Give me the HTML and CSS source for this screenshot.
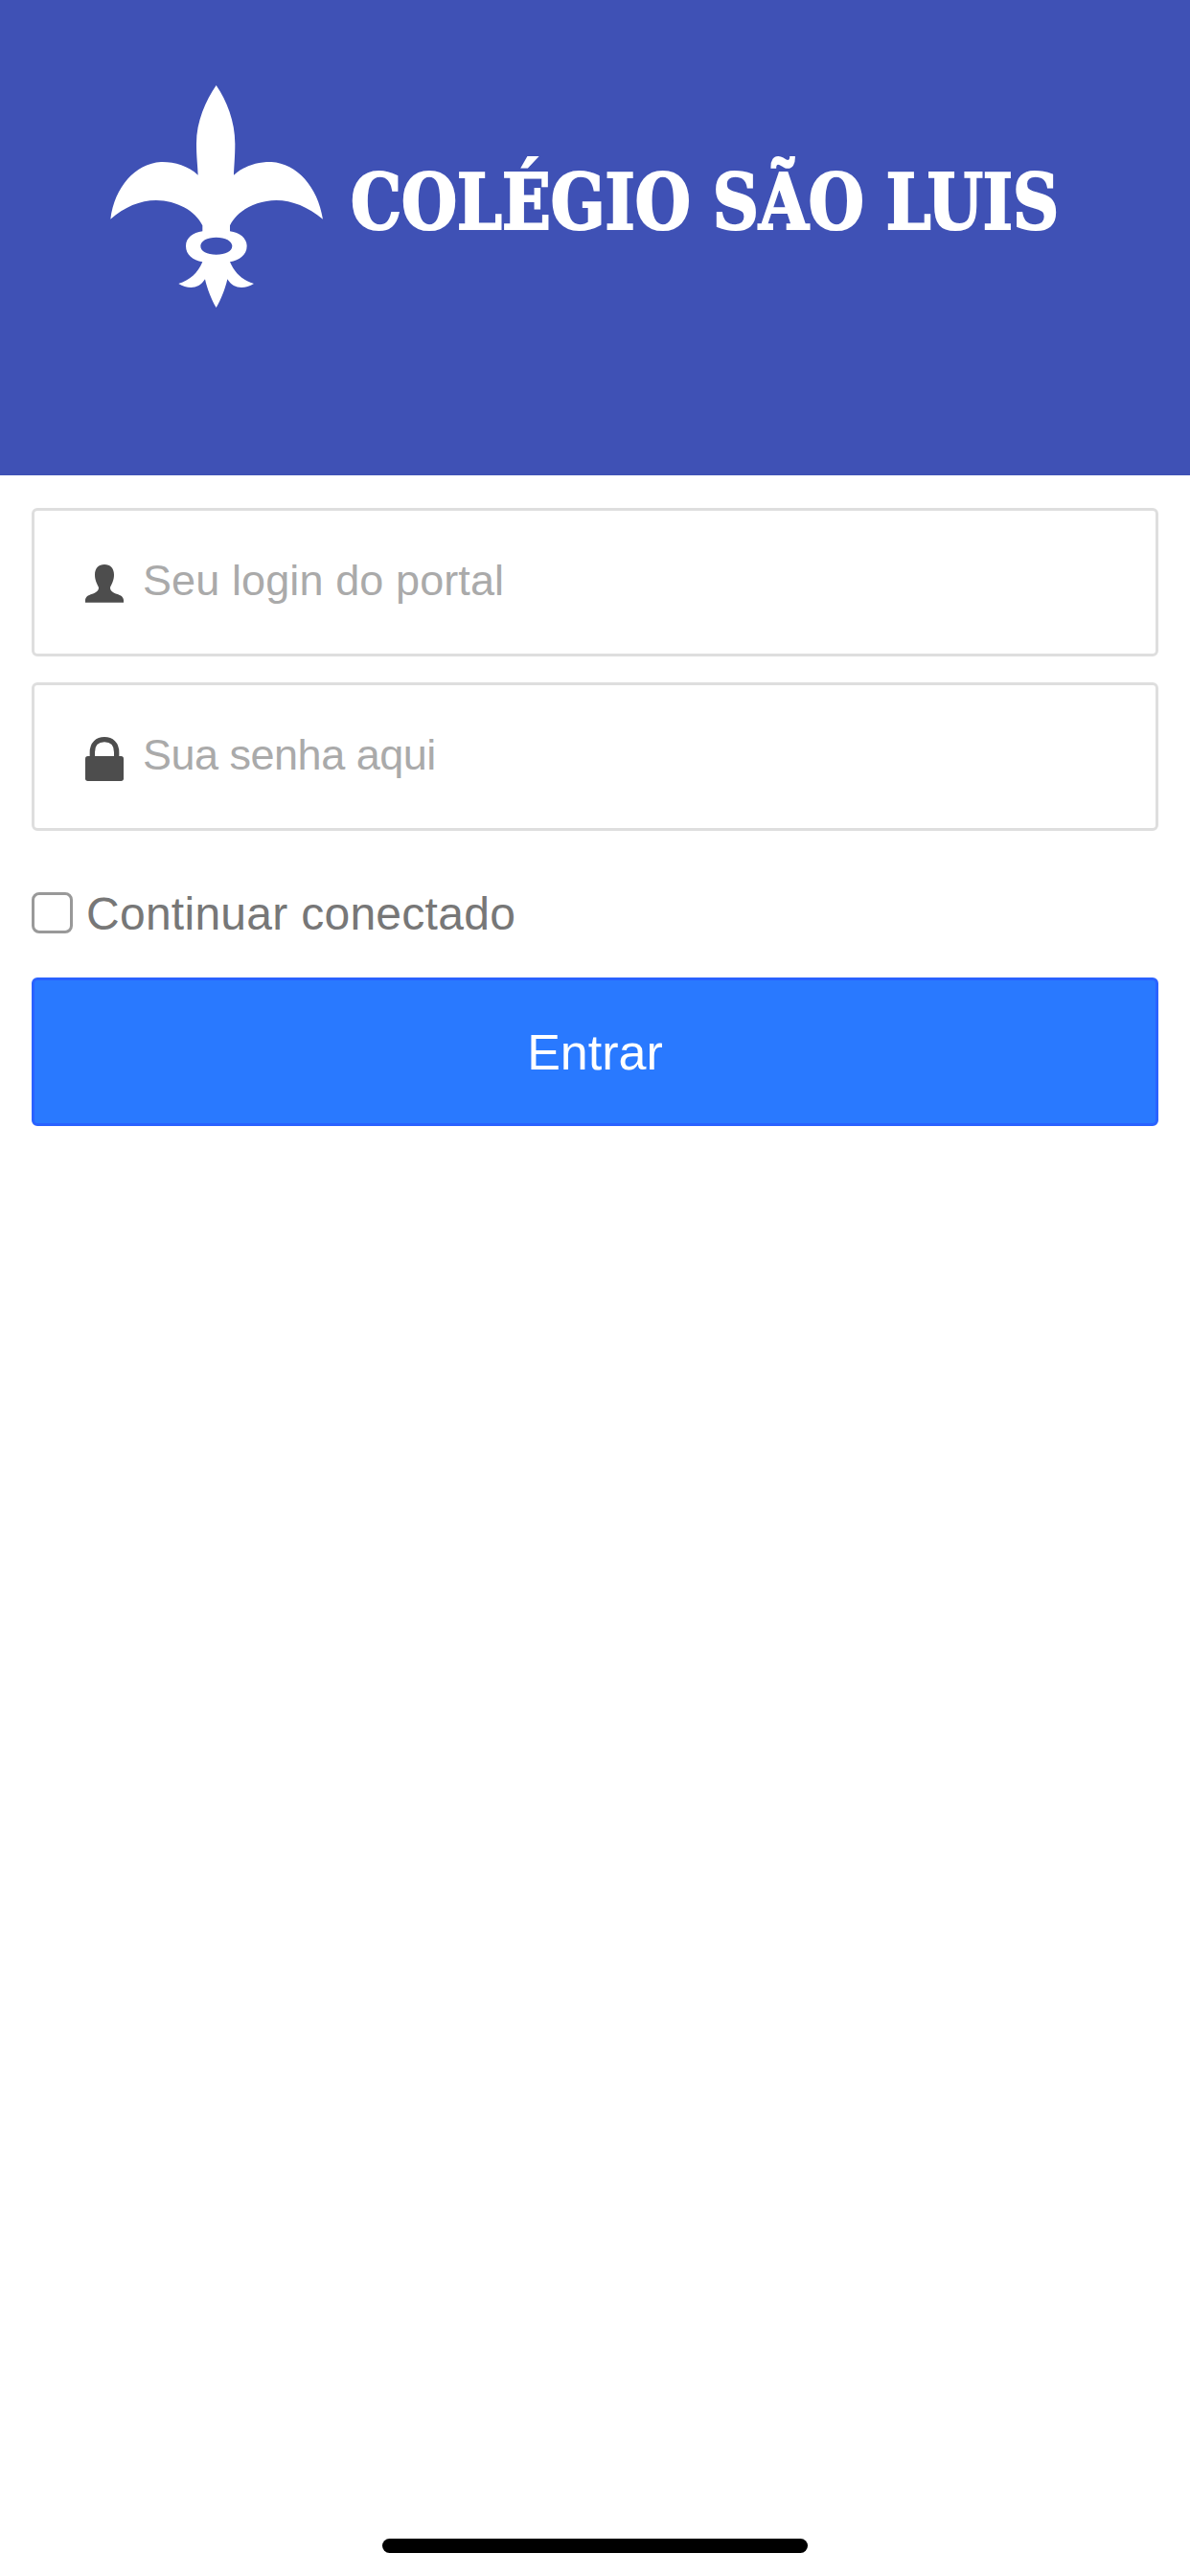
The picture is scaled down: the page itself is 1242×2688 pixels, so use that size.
FILE: index.html
```html
<!DOCTYPE html>
<html lang="pt-BR">

<head>
    <meta charset="UTF-8">
    <meta name="viewport" content="width=device-width, initial-scale=1.0">
    <title>Colégio São Luis - Portal</title>
    <link rel="stylesheet" href="styles.css">
</head>

<body>
    <!-- logo -->
    <header class="topo">
        <svg class="logo" viewBox="0 0 1152 270" aria-label="Colégio São Luis">
            <g transform="scale(0.3333)">
                <path fill="#fff" fill-rule="evenodd" d="M407 57 C440 105 466 170 466 240 C466 280 463 310 462 338 C495 308 540 296 580 297 C660 302 725 375 741 476 C695 438 645 417 595 417 C530 418 472 450 450 496 L450 514 C480 518 503 535 503 560 C503 588 480 604 450 610 C465 645 490 668 525 678 C495 696 462 696 442 664 C435 695 422 728 407 753 C392 728 379 695 372 664 C352 696 319 696 289 678 C324 668 349 645 364 610 C334 604 312 588 312 560 C312 535 334 518 364 514 L364 496 C342 450 284 418 219 417 C169 417 119 438 76 476 C89 375 154 302 234 297 C274 296 319 308 350 338 C349 310 345 280 345 240 C345 170 374 105 407 57 Z M407 533 C378 533 358 545 358 560 C358 576 378 587 407 587 C436 587 457 576 457 560 C457 545 436 533 407 533 Z" />
            </g>
            <text class="logo-nome" x="276" y="169" textLength="739" lengthAdjust="spacingAndGlyphs">COLÉGIO SÃO LUIS</text>
        </svg>
    </header>

    <!-- formulario de login -->
    <form class="login">
        <label class="campo">
            <svg class="campo-icone" viewBox="0 0 120 120">
                <path d="M60 0 C78 0 90 12 90 32 C90 50 82 62 78 72 C78 82 85 88 98 92 C112 96 120 102 120 112 L120 119 L0 119 L0 112 C0 102 8 96 22 92 C35 88 42 82 42 72 C38 62 30 50 30 32 C30 12 42 0 60 0 Z" />
            </svg>
            <input class="campo-input" type="text" placeholder="Seu login do portal">
        </label>

        <label class="campo">
            <svg class="campo-icone campo-icone-senha" viewBox="0 0 120 138">
                <rect x="0" y="60" width="120" height="78" rx="8" />
                <path class="cadeado" d="M22 64 V48 C22 22 38 8 60 8 C82 8 98 22 98 48 V64" />
            </svg>
            <input class="campo-input campo-input-senha" type="password" placeholder="Sua senha aqui">
        </label>

        <label class="lembrar">
            <input class="lembrar-check" type="checkbox">
            <span>Continuar conectado</span>
        </label>

        <button class="entrar" type="button">Entrar</button>
    </form>

    <!-- barra do iphone -->
    <div class="home-bar"></div>
</body>

</html>
```

FILE: styles.css
```css
:root {
    --indigo: #3f51b5;
    --azul: #2979ff;
    --azul-borda: #2962ff;
    --borda: #dedede;
}

* {
    box-sizing: border-box;
}

body {
    margin: 0;
    height: 2688px;
    position: relative;
    overflow: hidden;
    background-color: #fff;
    font-family: "Liberation Sans", Arial, sans-serif;
}

/* topo azul com o logo */
.topo {
    height: 496px;
    padding: 70px 0 0 90px;
    background-color: var(--indigo);
}

.logo {
    display: block;
    width: 1152px;
    height: 270px;
    filter: blur(0.6px);
}

.logo-nome {
    fill: #fff;
    stroke: #fff;
    stroke-width: 2.2px;
    font-family: "DejaVu Serif Condensed", "DejaVu Serif", serif;
    font-weight: 700;
    font-size: 80px;
}

/* formulario */
.login {
    display: flex;
    flex-direction: column;
    padding: 34px 33px 0;
}

.campo {
    display: flex;
    align-items: center;
    gap: 20px;
    height: 155px;
    margin-bottom: 27px;
    padding-left: 53px;
    border: 3px solid var(--borda);
    border-radius: 6px;
}

.campo-icone {
    flex: none;
    width: 40px;
    height: 40px;
    margin-top: 3px;
    fill: #4d4d4d;
}

.campo-icone-senha {
    height: 46px;
    margin-top: 5px;
}

.cadeado {
    fill: none;
    stroke: #4d4d4d;
    stroke-width: 16;
}

.campo-input {
    flex: 1;
    min-width: 0;
    padding: 0 0 3px;
    border: 0;
    outline: 0;
    background: none;
    font-family: inherit;
    font-size: 45px;
    letter-spacing: 0.1px;
    color: #555;
}

.campo-input-senha {
    letter-spacing: -0.5px;
}

.campo-input::placeholder {
    color: #aaa;
    opacity: 1;
}

.lembrar {
    display: flex;
    align-items: center;
    gap: 14px;
    margin-top: 35px;
    font-size: 48px;
    letter-spacing: 0.27px;
    line-height: 42px;
    color: #777;
}

.lembrar span {
    padding-top: 4px;
}

.lembrar-check {
    appearance: none;
    flex: none;
    width: 43px;
    height: 43px;
    margin: 0;
    border: 3px solid #999;
    border-radius: 8px;
    background-color: #fff;
}

.entrar {
    height: 155px;
    margin-top: 45px;
    padding: 0;
    border: 3px solid var(--azul-borda);
    border-radius: 6px;
    background-color: var(--azul);
    font-family: inherit;
    font-size: 52px;
    color: #fff;
}

.home-bar {
    position: absolute;
    left: 399px;
    top: 2649px;
    width: 444px;
    height: 15px;
    border-radius: 8px;
    background-color: #000;
}
```
